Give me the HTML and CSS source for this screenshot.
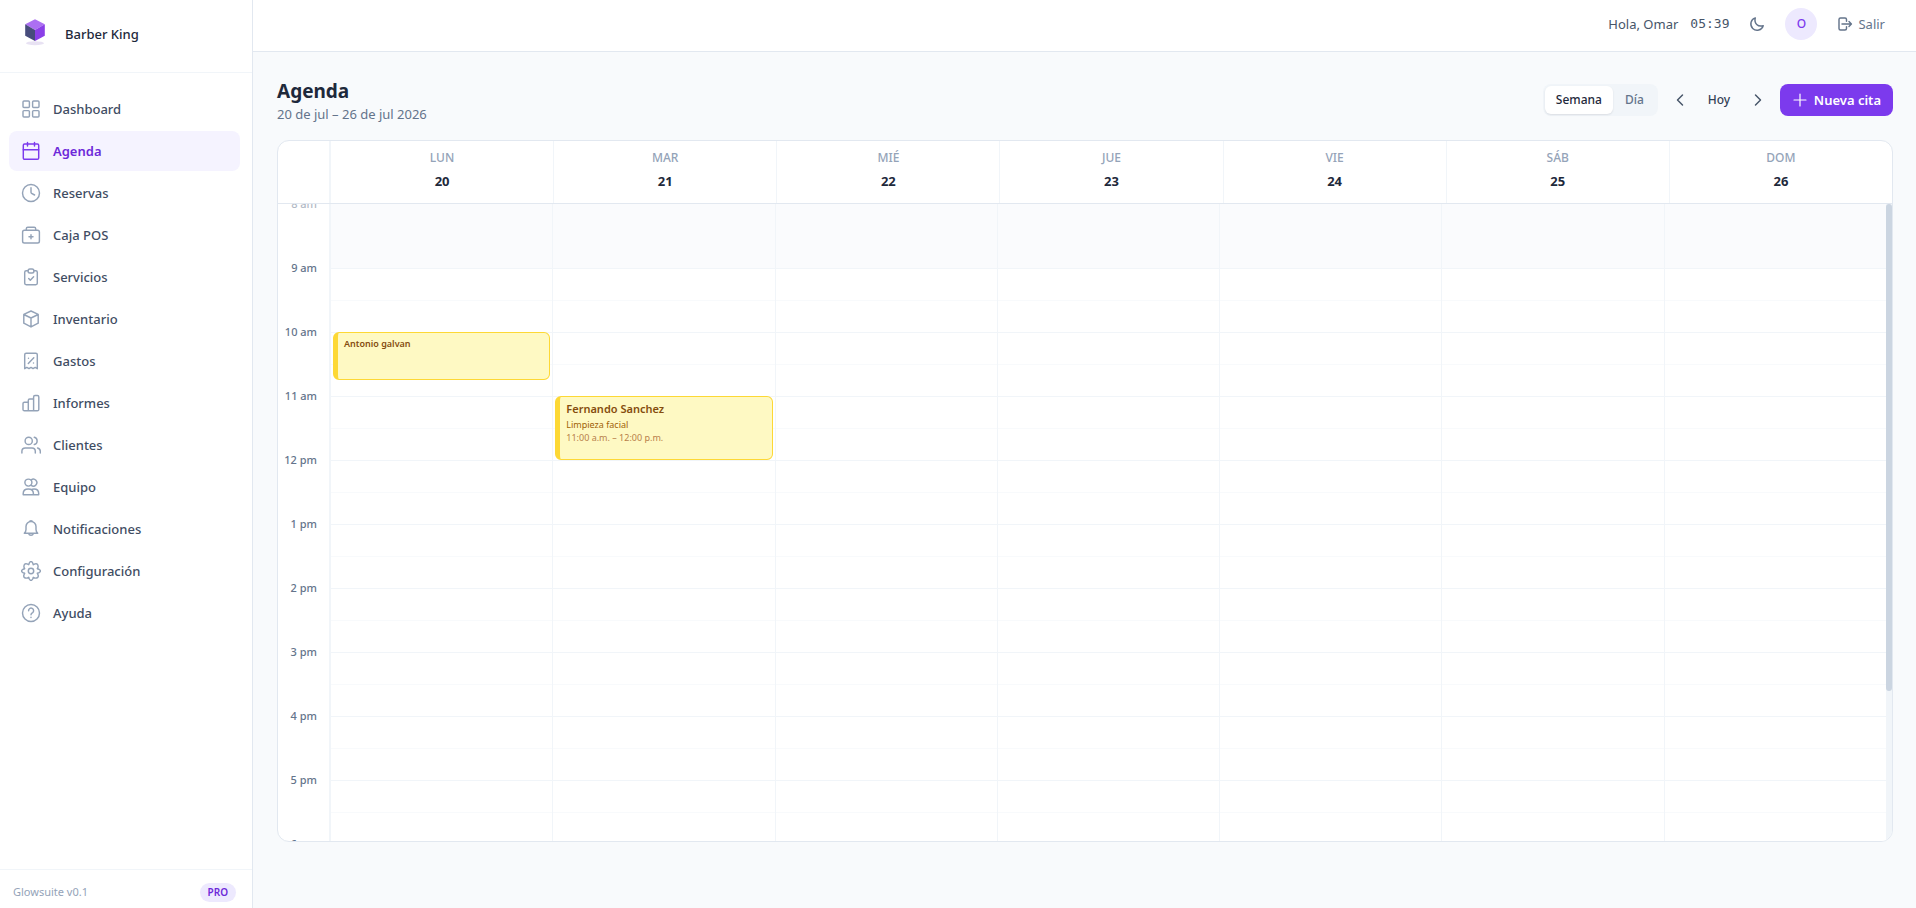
FILE: index.html
```html
<!DOCTYPE html>
<html lang="es">
<head>
<meta charset="utf-8">
<title>Agenda · Barber King</title>
<link rel="stylesheet" href="styles.css">
</head>
<body>
<div class="app">
  <aside class="sidebar">
    <div class="brand">
      <svg class="brand-logo" viewBox="0 0 40 40" aria-hidden="true">
        <ellipse cx="20" cy="29.200" rx="9" ry="2" fill="#e8e2f3"/>
        <path d="M20 5.300 29.800 10.300 20 16 10.200 10.300Z" fill="#ac6ff2"/>
        <path d="M10.200 10.300 20 16V27L10.200 21.700Z" fill="#474c7c"/>
        <path d="M29.800 10.300 20 16V27L29.800 21.700Z" fill="#8b3fe8"/>
      </svg>
      <span class="brand-name">Barber King</span>
    </div>
    <nav class="nav">
      <a class="nav-item" href="#"><svg class="icon" viewBox="0 0 20 20"><rect x="2" y="2" width="6.400" height="6.400" rx="1"/><rect x="11.600" y="2" width="6.400" height="6.400" rx="1"/><rect x="2" y="11.600" width="6.400" height="6.400" rx="1"/><rect x="11.600" y="11.600" width="6.400" height="6.400" rx="1"/></svg>Dashboard</a>
      <a class="nav-item active" href="#" aria-current="page"><svg class="icon" viewBox="0 0 20 20"><rect x="2.300" y="3" width="15.400" height="15.300" rx="1.300"/><path d="M6.500 1.500V5M13.500 1.500V5M2.300 8.700H17.700"/></svg>Agenda</a>
      <a class="nav-item" href="#"><svg class="icon" viewBox="0 0 20 20"><circle cx="10" cy="10" r="8.500"/><path d="M10 4.800V9.300Q10 10 10.600 10.300L13.600 12"/></svg>Reservas</a>
      <a class="nav-item" href="#"><svg class="icon" viewBox="0 0 20 20"><rect x="1.600" y="5.300" width="16.800" height="12.700" rx="1.800"/><path d="M5.300 5.300V3.800Q5.300 2.300 6.800 2.300H13.200Q14.700 2.300 14.700 3.800V5.300M10 9.700V13.700M8 11.700H12"/></svg>Caja POS</a>
      <a class="nav-item" href="#"><svg class="icon" viewBox="0 0 20 20"><path d="M7 3.700H5.200Q3.700 3.700 3.700 5.200V16.300Q3.700 17.700 5.200 17.700H14.800Q16.300 17.700 16.300 16.300V5.200Q16.300 3.700 14.800 3.700H13M7.700 11.500 9.300 13.200 12.600 9.700"/><rect x="7.100" y="2" width="5.800" height="4" rx="1.800"/></svg>Servicios</a>
      <a class="nav-item" href="#"><svg class="icon" viewBox="0 0 20 20"><path d="M10 2 17.200 5.300V14.200L10 17.900 2.800 14.200V5.300ZM2.800 5.500 10 9 17.200 5.500M10 9V17.900"/></svg>Inventario</a>
      <a class="nav-item" href="#"><svg class="icon" viewBox="0 0 20 20"><path d="M3.700 17.700V3.700Q3.700 2.200 5.200 2.200H14.800Q16.300 2.200 16.300 3.700V17.700L14.200 16.400 12 17.600 10 16.400 8 17.600 5.800 16.400ZM12.800 6.700 7.300 12.500M7.500 7.200V7.300M12.500 12V12.100"/></svg>Gastos</a>
      <a class="nav-item" href="#"><svg class="icon" viewBox="0 0 20 20"><path d="M7.300 17.800H3.400Q2 17.800 2 16.400V10.600Q2 9.200 3.400 9.200H7.300ZM7.300 17.800V7.300Q7.300 5.900 8.700 5.900H12.600V17.800ZM12.600 17.800V3.900Q12.600 2.500 14 2.500H16.400Q17.800 2.500 17.800 3.900V16.400Q17.800 17.800 16.400 17.800Z"/></svg>Informes</a>
      <a class="nav-item" href="#"><svg class="icon" viewBox="0 0 20 20"><circle cx="7.700" cy="5.900" r="3.600"/><path d="M.9 18V16.200Q.9 12.900 4.200 12.900H11Q14.300 12.900 14.300 16.200V18M13.300 2.300A3.700 3.700 0 0 1 13.300 9.500M16.600 13Q19.300 13.600 19.300 16.300V18"/></svg>Clientes</a>
      <a class="nav-item" href="#"><svg class="icon" viewBox="0 0 20 20"><circle cx="7.400" cy="5.600" r="3.500"/><path d="M10.200 2.800A3.500 3.500 0 1 1 10.200 8.400M2.200 17.700V16.500Q2.200 11.900 7.300 11.900T12.400 16.500V17.700ZM10.400 12.500Q11.500 11.900 13 11.900 17.700 11.900 17.700 16.500V17.700H12.400"/></svg>Equipo</a>
      <a class="nav-item" href="#"><svg class="icon" viewBox="0 0 20 20"><path d="M3.300 14.300Q5 12.700 5 10.500V7.500A5 5 0 0 1 15 7.500V10.500Q15 12.700 16.700 14.300ZM8.600 2.600Q8.600 1.700 10 1.700T11.400 2.600M7.600 14.500A2.500 2.500 0 0 0 12.400 14.500"/></svg>Notificaciones</a>
      <a class="nav-item" href="#"><svg class="icon" viewBox="0 0 20 20"><circle cx="10" cy="10" r="2.700"/><path d="M8.300 2Q10 -.9 11.700 2L12.300 3.700 14 2.900Q17.200 2 17.100 6L16.300 7.700 18 8.300Q20.900 10 18 11.700L16.300 12.300 17.100 14Q18 17.200 14 17.100L12.300 16.300 11.700 18Q10 20.900 8.300 18L7.700 16.300 6 17.100Q2 17.200 2.900 14L3.700 12.300 2 11.700Q-.9 10 2 8.300L3.700 7.700 2.900 6Q2.800 2 6 2.900L7.700 3.700Z"/></svg>Configuración</a>
      <a class="nav-item" href="#"><svg class="icon" viewBox="0 0 20 20"><circle cx="10" cy="10" r="8.500"/><path d="M7.600 7.700A2.500 2.500 0 1 1 11.600 9.600Q10 10.500 10 11.800M10 14.300V14.400"/></svg>Ayuda</a>
    </nav>
    <div class="sidebar-footer"><span>Glowsuite v0.1</span><span class="plan">PRO</span></div>
  </aside>

  <div class="content">
    <header class="topbar">
      <span>Hola, Omar</span>
      <time class="clock">05:39</time>
      <button class="theme" aria-label="Modo oscuro"><svg class="icon small" viewBox="0 0 16 16"><path d="M6.300 1.900A6.300 6.300 0 1 0 14.200 9.700Q10.200 10.800 7.700 8.400T6.300 1.900Z"/></svg></button>
      <span class="avatar">O</span>
      <button class="logout"><svg class="icon small" viewBox="0 0 16 16"><path d="M9.500 5.200V3.500Q9.500 2 8 2H3.500Q2 2 2 3.500V12.500Q2 14 3.500 14H8Q9.500 14 9.500 12.500V10.800M5 8H14.300M12 5.600 14.400 8 12 10.400"/></svg>Salir</button>
    </header>

    <main class="page">
      <div class="page-head">
        <div>
          <h1>Agenda</h1>
          <p class="range">20 de jul – 26 de jul 2026</p>
        </div>
        <div class="toolbar">
          <div class="segmented"><button class="seg selected">Semana</button><button class="seg">Día</button></div>
          <div class="pager">
            <button class="arrow" aria-label="Anterior"><svg class="icon small" viewBox="0 0 16 16"><path d="M10.500 3 5.500 8 10.500 13"/></svg></button>
            <button class="today">Hoy</button>
            <button class="arrow" aria-label="Siguiente"><svg class="icon small" viewBox="0 0 16 16"><path d="M5.500 3 10.500 8 5.500 13"/></svg></button>
          </div>
          <button class="primary"><svg class="icon small" viewBox="0 0 16 16"><path d="M8 2V14M2 8H14"/></svg>Nueva cita</button>
        </div>
      </div>

      <section class="calendar" aria-label="Semana">
        <div class="days">
          <div class="corner"></div>
          <div class="day"><span>LUN</span><b>20</b></div>
          <div class="day"><span>MAR</span><b>21</b></div>
          <div class="day"><span>MIÉ</span><b>22</b></div>
          <div class="day"><span>JUE</span><b>23</b></div>
          <div class="day"><span>VIE</span><b>24</b></div>
          <div class="day"><span>SÁB</span><b>25</b></div>
          <div class="day"><span>DOM</span><b>26</b></div>
        </div>
        <div class="scroller">
          <div class="viewport">
            <div class="hours">
              <span class="closed">8 am</span><span>9 am</span><span>10 am</span><span>11 am</span><span>12 pm</span><span>1 pm</span><span>2 pm</span><span>3 pm</span><span>4 pm</span><span>5 pm</span><span>6 pm</span>
            </div>
            <div class="column">
              <article class="event compact" style="top:128px;height:48px"><strong>Antonio galvan</strong></article>
            </div>
            <div class="column">
              <article class="event" style="top:192px;height:64px"><strong>Fernando Sanchez</strong><span>Limpieza facial</span><span class="time">11:00 a.m. – 12:00 p.m.</span></article>
            </div>
            <div class="column"></div>
            <div class="column"></div>
            <div class="column"></div>
            <div class="column"></div>
            <div class="column"></div>
          </div>
          <div class="track"><div class="thumb"></div></div>
        </div>
      </section>
    </main>
  </div>
</div>
</body>
</html>
```
FILE: styles.css
```css
* { box-sizing: border-box; }

body {
  margin: 0;
  font-family: "Segoe UI", "Noto Sans", "Open Sans", sans-serif;
  font-size: 13px;
  line-height: 20px;
  color: #475569;
  background: #f8fafc;
}

button {
  font: inherit;
  color: inherit;
  background: none;
  border: 0;
  padding: 0;
}

.icon {
  width: 20px;
  height: 20px;
  flex: none;
  fill: none;
  stroke: currentColor;
  stroke-width: 1.45;
  stroke-linecap: round;
  stroke-linejoin: round;
}
.icon.small { width: 16px; height: 16px; }

.app { display: flex; height: 100vh; }

/* Sidebar */
.sidebar {
  width: 253px;
  flex: none;
  display: flex;
  flex-direction: column;
  background: #fff;
  border-right: 1px solid #e2e8f0;
}
.brand {
  display: flex;
  align-items: center;
  gap: 10px;
  height: 73px;
  padding: 0 15px 4px;
  border-bottom: 1px solid #f1f5f9;
}
.brand-logo { width: 40px; height: 40px; }
.brand-name { font-weight: 500; color: #1e293b; }
.nav {
  flex: 1;
  display: flex;
  flex-direction: column;
  gap: 2px;
  padding: 16px 12px 16px 9px;
}
.nav-item {
  display: flex;
  align-items: center;
  gap: 12px;
  height: 40px;
  padding: 0 12px;
  border-radius: 8px;
  font-weight: 500;
  color: #3f4d63;
  text-decoration: none;
}
.nav-item .icon { color: #94a3b8; }
.nav-item.active { background: #f5f3ff; color: #6d28d9; font-weight: 600; }
.nav-item.active .icon { color: #7c3aed; }
.sidebar-footer {
  display: flex;
  align-items: center;
  justify-content: space-between;
  height: 39px;
  padding: 6px 16px 0 13px;
  border-top: 1px solid #f1f5f9;
  font-size: 11px;
  color: #94a3b8;
}
.plan {
  padding: 2px 8px;
  border-radius: 10px;
  background: #ede9fe;
  color: #6d28d9;
  font-size: 10px;
  font-weight: 600;
  line-height: 15px;
}

/* Top bar */
.content { flex: 1; min-width: 0; display: flex; flex-direction: column; }
.topbar {
  display: flex;
  align-items: center;
  justify-content: flex-end;
  height: 52px;
  padding: 0 31px 3px;
  background: #fff;
  border-bottom: 1px solid #e2e8f0;
}
.clock { margin-left: 12px; font: 13px/20px "DejaVu Sans Mono", monospace; }
.theme, .logout, .arrow { display: flex; align-items: center; justify-content: center; }
.theme { width: 32px; height: 32px; margin: 0 12px; color: #64748b; }
.avatar {
  width: 32px;
  height: 32px;
  border-radius: 50%;
  background: #ede9fe;
  color: #7c3aed;
  font-size: 12px;
  font-weight: 500;
  line-height: 32px;
  text-align: center;
}
.logout { gap: 5px; margin-left: 20px; color: #64748b; }

/* Page */
.page {
  flex: 1;
  min-height: 0;
  display: flex;
  flex-direction: column;
  padding: 24px 23px 66px 24px;
}
.page-head {
  display: flex;
  align-items: center;
  justify-content: space-between;
  height: 48px;
  margin-bottom: 16px;
}
h1 { margin: 0; padding-top: 2px; font-size: 19px; line-height: 26px; font-weight: 700; color: #1e293b; }
.range { margin: 0; line-height: 20px; color: #64748b; }
.toolbar { display: flex; align-items: center; font-size: 12px; }
.segmented { display: flex; padding: 2px; border-radius: 8px; background: #f1f5f9; }
.seg { height: 28px; padding: 0 12px; border-radius: 6px; font-weight: 500; color: #64748b; }
.seg.selected { padding: 0 11px; background: #fff; color: #1e293b; box-shadow: 0 1px 2px #0f172a1a; }
.pager { display: flex; align-items: center; margin: 0 6px; }
.arrow { width: 32px; height: 32px; color: #475569; }
.today { width: 46px; height: 32px; font-weight: 500; color: #334155; }
.primary {
  display: flex;
  align-items: center;
  gap: 6px;
  height: 32px;
  padding: 0 12px;
  border-radius: 8px;
  background: #7c3aed;
  color: #fff;
  font-size: 13px;
  font-weight: 600;
}
.primary .icon { stroke-width: 1.2; }

/* Calendar */
.calendar {
  flex: 1;
  min-height: 0;
  display: flex;
  flex-direction: column;
  overflow: hidden;
  background: #fff;
  border: 1px solid #e2e8f0;
  border-radius: 12px;
}
.days { display: flex; height: 63px; flex: none; border-bottom: 1px solid #e2e8f0; }
.corner, .hours { width: 52px; flex: none; border-right: 1px solid #f1f5f9; }
.day {
  flex: 1;
  display: flex;
  flex-direction: column;
  align-items: center;
  gap: 3px;
  padding-top: 7px;
  border-left: 1px solid #f1f5f9;
  font-size: 12px;
  color: #94a3b8;
}
.day span { font-weight: 500; }
.day b { font-size: 13px; color: #1e293b; }
.scroller { flex: 1; min-height: 0; display: flex; }
.viewport { flex: 1; display: flex; overflow: hidden; }
.hours {
  display: flex;
  flex-direction: column;
  height: 714px;
  margin-top: -10px;
  padding-right: 12px;
  text-align: right;
  font-size: 11px;
  font-weight: 500;
  color: #64748b;
}
.hours span { height: 64px; flex: none; }
.hours .closed { opacity: .5; }
.column {
  flex: 1;
  position: relative;
  height: 704px;
  border-left: 1px solid #f1f5f9;
  background:
    linear-gradient(#fafbfd 64px, transparent 64px),
    repeating-linear-gradient(#f1f5f9 0 1px, #fff 1px 32px, #f8fafc 32px 33px, #fff 33px 64px);
}
.event {
  position: absolute;
  left: 2px;
  right: 2px;
  display: flex;
  flex-direction: column;
  padding: 4px 6px;
  overflow: hidden;
  background: #fef9c3;
  border: 1px solid #fdd835;
  border-left-width: 5px;
  border-radius: 6px;
  font-size: 9px;
  line-height: 13px;
  color: #a16207;
}
.event strong { margin-bottom: 2px; font-size: 11px; line-height: 15px; font-weight: 600; color: #854d0e; }
.event.compact strong { font-size: 9px; line-height: 14px; }
.event .time { color: #b87f4a; }
.track { width: 6px; flex: none; background: #f1f5f9; }
.thumb { height: 76.4%; border-radius: 3px; background: #cbd5e1; }
```
